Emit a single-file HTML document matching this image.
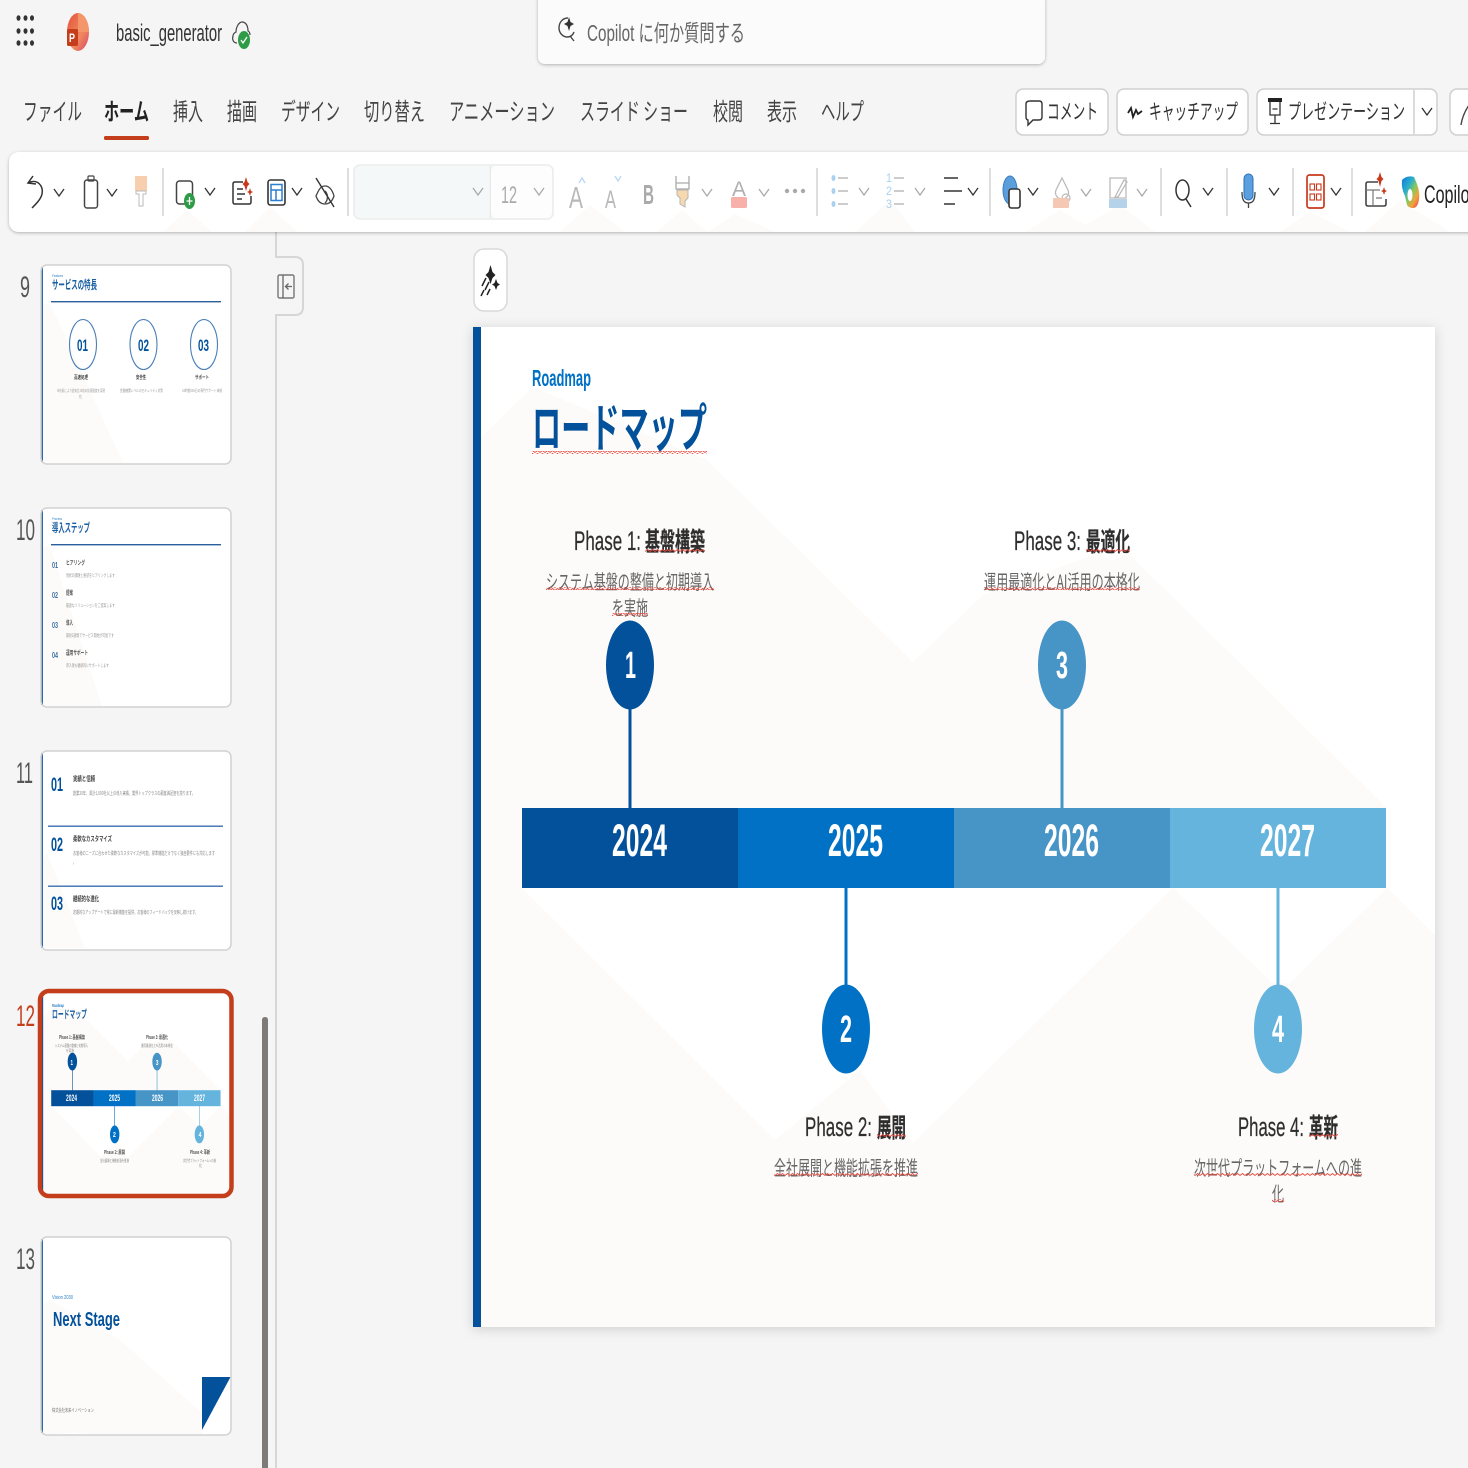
<!DOCTYPE html>
<html lang="ja"><head><meta charset="utf-8"><title>basic_generator</title>
<style>
html,body{margin:0;padding:0;width:1468px;height:1468px;overflow:hidden;background:#f5f5f5}
svg{display:block}
text{font-family:"Liberation Sans","Noto Sans CJK JP",sans-serif;white-space:pre}
.j{font-family:"Noto Sans CJK JP","Liberation Sans",sans-serif}
</style></head><body>
<svg width="1468" height="1468" viewBox="0 0 1468 1468" xmlns="http://www.w3.org/2000/svg">
<defs>
<filter id="sh" x="-5%" y="-5%" width="110%" height="110%"><feDropShadow dx="0" dy="2" stdDeviation="6" flood-color="#000" flood-opacity=".16"/></filter>
<filter id="sh2" x="-5%" y="-30%" width="110%" height="160%"><feDropShadow dx="0" dy="1" stdDeviation="1.5" flood-color="#000" flood-opacity=".28"/></filter>
<pattern id="w" width="5" height="3" patternUnits="userSpaceOnUse"><path d="M0 2.5L2.5 .5L5 2.5" stroke="#e8483f" fill="none" stroke-width=".9"/></pattern>
<path id="c" d="M0 0l5 7 5-7" fill="none" stroke="#333" stroke-width="1.300"/>
<path id="g" d="M0 0l5 7 5-7" fill="none" stroke="#aaa" stroke-width="1.300"/>
<linearGradient id="pp" x1="0" y1="0" x2="1" y2="1"><stop offset="0" stop-color="#e2523c"/><stop offset=".6" stop-color="#f08a5d"/><stop offset="1" stop-color="#d9466a"/></linearGradient>
<linearGradient id="cp" x1="0" y1="0" x2="1" y2="1"><stop offset="0" stop-color="#0f78e0"/><stop offset=".35" stop-color="#2db0c8"/><stop offset=".55" stop-color="#8ac85a"/><stop offset=".75" stop-color="#f2a33c"/><stop offset="1" stop-color="#e8385a"/></linearGradient>
<g id="shapes">
<rect x="473" y="327" width="962" height="1000" fill="#fff"/>
<polygon fill="#fdfbf9" points="481,437 533,387 707,460 913,662 983,595 1099,553 1113,561 1128,553 1387,808 522,808 522,888 775,1140 860,1070 913,1143 1173,888 1273,983 1290,983 1387,888 1435,935 1435,1327 481,1327"/>
<rect x="473" y="327" width="8" height="1000" fill="#03519b"/>
<rect x="628.500" y="705" width="3" height="104" fill="#03519b"/>
<rect x="1060.500" y="705" width="3" height="104" fill="#4794c7"/>
<rect x="844.500" y="887" width="3" height="104" fill="#0071c5"/>
<rect x="1276.500" y="887" width="3" height="104" fill="#64b4de"/>
<rect x="522" y="808" width="216" height="80" fill="#03519b"/>
<rect x="738" y="808" width="216" height="80" fill="#0071c5"/>
<rect x="954" y="808" width="216" height="80" fill="#4794c7"/>
<rect x="1170" y="808" width="216" height="80" fill="#64b4de"/>
<ellipse cx="630" cy="665" rx="24" ry="44.500" fill="#03519b"/>
<ellipse cx="1062" cy="665" rx="24" ry="44.500" fill="#4794c7"/>
<ellipse cx="846" cy="1029" rx="24" ry="44.500" fill="#0071c5"/>
<ellipse cx="1278" cy="1029" rx="24" ry="44.500" fill="#64b4de"/>
</g>
</defs>

<rect width="1468" height="1468" fill="#f5f5f5"/>

<!-- title bar -->
<g fill="#333"><ellipse cx="18.500" cy="18" rx="2" ry="2.800"/><ellipse cx="25.500" cy="18" rx="2" ry="2.800"/><ellipse cx="32" cy="18" rx="2" ry="2.800"/><ellipse cx="18.500" cy="31" rx="2" ry="2.800"/><ellipse cx="25.500" cy="31" rx="2" ry="2.800"/><ellipse cx="32" cy="31" rx="2" ry="2.800"/><ellipse cx="18.500" cy="43" rx="2" ry="2.800"/><ellipse cx="25.500" cy="43" rx="2" ry="2.800"/><ellipse cx="32" cy="43" rx="2" ry="2.800"/></g>
<ellipse cx="78" cy="32" rx="11" ry="19" fill="url(#pp)"/>
<path d="M78 13a11 19 0 0 1 11 19H78z" fill="#f5966a"/>
<rect x="67" y="29" width="11" height="17" rx="1.500" fill="#c43e1c"/>
<text x="69" y="42" font-size="12" font-weight="700" fill="#fff" textLength="6" lengthAdjust="spacingAndGlyphs">P</text>
<text x="116" y="41" font-size="24" fill="#333" textLength="106" lengthAdjust="spacingAndGlyphs">basic_generator</text>
<path d="M237 43c-4 0-5-4-4-7 0-2 1-3 3-4 0-5 3-10 6-10 4 0 6 4 6 9 2 1 2 3 2 4" fill="none" stroke="#444" stroke-width="1.200"/>
<ellipse cx="244" cy="40" rx="6" ry="9" fill="#2e9b47"/>
<path d="M241 40l2 3 4-6" fill="none" stroke="#fff" stroke-width="1.300"/>

<!-- search -->
<rect x="538" y="-8" width="507" height="72" rx="7" fill="#fbfbfb" filter="url(#sh2)"/>
<path d="M568 18c-6 0-9 5-9 10s4 9 8 9 6-2 7-5M570 36l4 5" fill="none" stroke="#444" stroke-width="1.400"/>
<path d="M569 17l1.500 5 3.500 2-3.500 2-1.500 5-1.500-5-3.500-2 3.500-2z" fill="#333"/>
<text x="587" y="41" font-size="23" fill="#666" textLength="158" lengthAdjust="spacingAndGlyphs">Copilot に何か質問する</text>

<!-- tabs -->
<g class="j" font-size="24" fill="#444">
<text class="j" x="23" y="120" textLength="59" lengthAdjust="spacingAndGlyphs">ファイル</text>
<text class="j" x="104" y="120" font-weight="700" fill="#222" textLength="45" lengthAdjust="spacingAndGlyphs">ホーム</text>
<text class="j" x="173" y="120" textLength="30" lengthAdjust="spacingAndGlyphs">挿入</text>
<text class="j" x="227" y="120" textLength="30" lengthAdjust="spacingAndGlyphs">描画</text>
<text class="j" x="281" y="120" textLength="59" lengthAdjust="spacingAndGlyphs">デザイン</text>
<text class="j" x="364" y="120" textLength="61" lengthAdjust="spacingAndGlyphs">切り替え</text>
<text class="j" x="449" y="120" textLength="106" lengthAdjust="spacingAndGlyphs">アニメーション</text>
<text class="j" x="580" y="120" textLength="108" lengthAdjust="spacingAndGlyphs">スライド ショー</text>
<text class="j" x="713" y="120" textLength="30" lengthAdjust="spacingAndGlyphs">校閲</text>
<text class="j" x="767" y="120" textLength="30" lengthAdjust="spacingAndGlyphs">表示</text>
<text class="j" x="821" y="120" textLength="43" lengthAdjust="spacingAndGlyphs">ヘルプ</text>
</g>
<rect x="104" y="136" width="45" height="4" rx="1.500" fill="#c43e1c"/>

<!-- right buttons -->
<g fill="#fff" stroke="#d0d0d0" stroke-width="1.500">
<rect x="1016" y="89" width="92" height="46" rx="7"/>
<rect x="1117" y="89" width="131" height="46" rx="7"/>
<rect x="1257" y="89" width="180" height="46" rx="7"/>
<rect x="1450" y="89" width="40" height="46" rx="7"/>
<path d="M1414 90v44"/>
</g>
<path d="M1030 101h9q3 0 3 3v13q0 3-3 3h-6l-5 5v-5q-2-.5-2-3v-13q0-3 4-3z" fill="none" stroke="#333" stroke-width="1.400"/>
<g class="j" font-size="21" fill="#333">
<text class="j" x="1047" y="119" textLength="51" lengthAdjust="spacingAndGlyphs">コメント</text>
<text class="j" x="1149" y="119" textLength="89" lengthAdjust="spacingAndGlyphs">キャッチアップ</text>
<text class="j" x="1288" y="119" textLength="117" lengthAdjust="spacingAndGlyphs">プレゼンテーション</text>
</g>
<path d="M1128 113l3-5 2 9 3-7 2 4 4-3" fill="none" stroke="#222" stroke-width="1.800"/>
<rect x="1268" y="98" width="14" height="4" fill="#222"/>
<path d="M1270 102v13h10v-13M1272.500 109h5M1275 115v8M1270 123.500h10" fill="none" stroke="#333" stroke-width="1.300"/>
<use href="#c" x="1422" y="108"/>
<path d="M1461 125c1-7 4-14 8-20" fill="none" stroke="#444" stroke-width="1.400"/>

<!-- slide pane -->
<rect x="275" y="232" width="2" height="1236" fill="#d8d6da"/>
<path d="M275 257h20q8 0 8 8v42q0 8-8 8h-20" fill="#f5f5f5" stroke="#d6d6d6" stroke-width="2"/>
<rect x="278" y="275" width="16" height="23" rx="1.500" fill="none" stroke="#777" stroke-width="1.400"/>
<path d="M283 275v23M292 286.500h-6M288.500 283.500l-3 3 3 3" fill="none" stroke="#666" stroke-width="1.300"/>
<path d="M262 1468V1020q0-3 3-3t3 3v448z" fill="#7d7a78"/>

<!-- number labels -->
<g font-size="30" fill="#555">
<text x="20" y="297" textLength="10" lengthAdjust="spacingAndGlyphs">9</text>
<text x="16" y="540" textLength="19" lengthAdjust="spacingAndGlyphs">10</text>
<text x="16" y="783" textLength="17" lengthAdjust="spacingAndGlyphs">11</text>
<text x="16" y="1026" fill="#c43e1c" textLength="19" lengthAdjust="spacingAndGlyphs">12</text>
<text x="16" y="1269" textLength="19" lengthAdjust="spacingAndGlyphs">13</text>
</g>

<!-- thumb 9 -->
<rect x="41" y="265" width="190" height="199" rx="6" fill="#fff"/>
<polygon fill="#fdfbf9" points="43,304 50,303 123,463 43,463" />
<rect x="41" y="267" width="2" height="195" fill="#2a69ad"/>
<text x="52" y="277" font-size="4" fill="#2a7fc5" textLength="11" lengthAdjust="spacingAndGlyphs">Features</text>
<text class="j" x="52" y="289" font-size="12" font-weight="700" fill="#1b5fa3" textLength="45" lengthAdjust="spacingAndGlyphs">サービスの特長</text>
<rect x="51" y="301" width="170" height="1.400" fill="#2a5f9e"/>
<g fill="none" stroke="#4a7fb8" stroke-width="1.100"><ellipse cx="83" cy="344.500" rx="13.500" ry="25"/><ellipse cx="143.500" cy="344.500" rx="13.500" ry="25"/><ellipse cx="204" cy="344.500" rx="13.500" ry="25"/></g>
<g font-size="17" font-weight="700" fill="#03519b">
<text x="77" y="351" textLength="11" lengthAdjust="spacingAndGlyphs">01</text>
<text x="138" y="351" textLength="11" lengthAdjust="spacingAndGlyphs">02</text>
<text x="198" y="351" textLength="11" lengthAdjust="spacingAndGlyphs">03</text>
</g>
<g class="j" font-size="5" font-weight="700" fill="#444">
<text class="j" x="74" y="379" textLength="14" lengthAdjust="spacingAndGlyphs">高速処理</text>
<text class="j" x="136" y="379" textLength="10" lengthAdjust="spacingAndGlyphs">安全性</text>
<text class="j" x="195" y="379" textLength="14" lengthAdjust="spacingAndGlyphs">サポート</text>
</g>
<g class="j" font-size="4" fill="#999">
<text class="j" x="57" y="392" textLength="48" lengthAdjust="spacingAndGlyphs">AI技術により従来比10倍の処理速度を実現</text>
<text class="j" x="79" y="398" textLength="3" lengthAdjust="spacingAndGlyphs">化</text>
<text class="j" x="120" y="392" textLength="43" lengthAdjust="spacingAndGlyphs">金融機関レベルのセキュリティ対策</text>
<text class="j" x="182" y="392" textLength="40" lengthAdjust="spacingAndGlyphs">24時間365日の専門サポート体制</text>
</g>
<rect x="41" y="265" width="190" height="199" rx="6" fill="none" stroke="#d2d2d2" stroke-width="1.500"/>

<!-- thumb 10 -->
<rect x="41" y="508" width="190" height="199" rx="6" fill="#fff"/>
<polygon fill="#fdfbf9" points="43,548 50,546 102,706 43,706"/>
<rect x="41" y="510" width="2" height="195" fill="#2a69ad"/>
<text x="52" y="520" font-size="4" fill="#2a7fc5" textLength="10" lengthAdjust="spacingAndGlyphs">Process</text>
<text class="j" x="52" y="532" font-size="12" font-weight="700" fill="#1b5fa3" textLength="38" lengthAdjust="spacingAndGlyphs">導入ステップ</text>
<rect x="51" y="544" width="170" height="1.400" fill="#2a5f9e"/>
<g font-size="8" font-weight="700" fill="#3a6ea5">
<text x="52" y="568" textLength="6" lengthAdjust="spacingAndGlyphs">01</text>
<text x="52" y="598" textLength="6" lengthAdjust="spacingAndGlyphs">02</text>
<text x="52" y="628" textLength="6" lengthAdjust="spacingAndGlyphs">03</text>
<text x="52" y="658" textLength="6" lengthAdjust="spacingAndGlyphs">04</text>
</g>
<g class="j" font-size="6" font-weight="700" fill="#555">
<text class="j" x="66" y="565" textLength="19" lengthAdjust="spacingAndGlyphs">ヒアリング</text>
<text class="j" x="66" y="595" textLength="7" lengthAdjust="spacingAndGlyphs">提案</text>
<text class="j" x="66" y="625" textLength="7" lengthAdjust="spacingAndGlyphs">導入</text>
<text class="j" x="66" y="655" textLength="22" lengthAdjust="spacingAndGlyphs">運用サポート</text>
</g>
<g class="j" font-size="4.500" fill="#999">
<text class="j" x="66" y="577" textLength="49" lengthAdjust="spacingAndGlyphs">現状の課題と要望をヒアリングします</text>
<text class="j" x="66" y="607" textLength="49" lengthAdjust="spacingAndGlyphs">最適なソリューションをご提案します</text>
<text class="j" x="66" y="637" textLength="48" lengthAdjust="spacingAndGlyphs">最短2週間でサービス開始が可能です</text>
<text class="j" x="66" y="667" textLength="43" lengthAdjust="spacingAndGlyphs">導入後も継続的にサポートします</text>
</g>
<rect x="41" y="508" width="190" height="199" rx="6" fill="none" stroke="#d2d2d2" stroke-width="1.500"/>

<!-- thumb 11 -->
<rect x="41" y="751" width="190" height="199" rx="6" fill="#fff"/>
<polygon fill="#fdfbf9" points="43,859 47,853 85,948 43,948"/>
<rect x="41" y="753" width="2" height="195" fill="#2a69ad"/>
<g font-size="19" font-weight="700" fill="#03519b">
<text x="51" y="791" textLength="12" lengthAdjust="spacingAndGlyphs">01</text>
<text x="51" y="851" textLength="12" lengthAdjust="spacingAndGlyphs">02</text>
<text x="51" y="910" textLength="12" lengthAdjust="spacingAndGlyphs">03</text>
</g>
<rect x="48" y="825.500" width="175" height="1.400" fill="#3a70ad"/>
<rect x="48" y="885.500" width="175" height="1.400" fill="#3a70ad"/>
<g class="j" font-size="7" font-weight="700" fill="#444">
<text class="j" x="73" y="781" textLength="22" lengthAdjust="spacingAndGlyphs">実績と信頼</text>
<text class="j" x="73" y="841" textLength="39" lengthAdjust="spacingAndGlyphs">柔軟なカスタマイズ</text>
<text class="j" x="73" y="901" textLength="26" lengthAdjust="spacingAndGlyphs">継続的な進化</text>
</g>
<g class="j" font-size="5" fill="#888">
<text class="j" x="73" y="795" textLength="122" lengthAdjust="spacingAndGlyphs">創業20年、累計1,000社以上の導入実績。業界トップクラスの顧客満足度を誇ります。</text>
<text class="j" x="73" y="855" textLength="142" lengthAdjust="spacingAndGlyphs">お客様のニーズに合わせた柔軟なカスタマイズが可能。標準機能だけでなく独自要件にも対応します</text>
<text class="j" x="73" y="864" textLength="3" lengthAdjust="spacingAndGlyphs">。</text>
<text class="j" x="73" y="914" textLength="125" lengthAdjust="spacingAndGlyphs">定期的なアップデートで常に最新機能を提供。お客様のフィードバックを反映し続けます。</text>
</g>
<rect x="41" y="751" width="190" height="199" rx="6" fill="none" stroke="#d2d2d2" stroke-width="1.500"/>

<!-- thumb 12 -->
<g transform="translate(41.600 994) scale(.196 .2) translate(-473 -327)"><use href="#shapes"/></g>
<text x="52" y="1007" font-size="4.500" font-weight="700" fill="#2a7fc5" textLength="12" lengthAdjust="spacingAndGlyphs">Roadmap</text>
<text class="j" x="52" y="1018" font-size="11" font-weight="700" fill="#1b5fa3" textLength="35" lengthAdjust="spacingAndGlyphs">ロードマップ</text>
<g class="j" font-size="5" font-weight="700" fill="#555">
<text class="j" x="59" y="1039" textLength="26" lengthAdjust="spacingAndGlyphs">Phase 1: 基盤構築</text>
<text class="j" x="146" y="1039" textLength="22" lengthAdjust="spacingAndGlyphs">Phase 3: 最適化</text>
<text class="j" x="104" y="1154" textLength="21" lengthAdjust="spacingAndGlyphs">Phase 2: 展開</text>
<text class="j" x="190" y="1154" textLength="20" lengthAdjust="spacingAndGlyphs">Phase 4: 革新</text>
</g>
<g class="j" font-size="4" fill="#888">
<text class="j" x="55" y="1047" textLength="33" lengthAdjust="spacingAndGlyphs">システム基盤の整備と初期導入</text>
<text class="j" x="66" y="1052" textLength="8" lengthAdjust="spacingAndGlyphs">を実施</text>
<text class="j" x="141" y="1047" textLength="32" lengthAdjust="spacingAndGlyphs">運用最適化とAI活用の本格化</text>
<text class="j" x="100" y="1162" textLength="29" lengthAdjust="spacingAndGlyphs">全社展開と機能拡張を推進</text>
<text class="j" x="183" y="1162" textLength="33" lengthAdjust="spacingAndGlyphs">次世代プラットフォームへの進</text>
<text class="j" x="199" y="1167" textLength="3" lengthAdjust="spacingAndGlyphs">化</text>
</g>
<g font-size="9" font-weight="700" fill="#fff">
<text x="66" y="1101" textLength="11" lengthAdjust="spacingAndGlyphs">2024</text>
<text x="109" y="1101" textLength="11" lengthAdjust="spacingAndGlyphs">2025</text>
<text x="152" y="1101" textLength="11" lengthAdjust="spacingAndGlyphs">2026</text>
<text x="194" y="1101" textLength="11" lengthAdjust="spacingAndGlyphs">2027</text>
</g>
<g font-size="7.500" font-weight="700" fill="#fff">
<text x="70.500" y="1065" textLength="2.500" lengthAdjust="spacingAndGlyphs">1</text>
<text x="155.800" y="1065" textLength="2.800" lengthAdjust="spacingAndGlyphs">3</text>
<text x="113" y="1137" textLength="2.800" lengthAdjust="spacingAndGlyphs">2</text>
<text x="198.600" y="1137" textLength="2.800" lengthAdjust="spacingAndGlyphs">4</text>
</g>
<rect x="40" y="991" width="191.500" height="205" rx="9" fill="none" stroke="#c43e1c" stroke-width="4.500"/>

<!-- thumb 13 -->
<rect x="41" y="1237" width="190" height="198" rx="6" fill="#fff"/>
<polygon fill="#fdfbf9" points="43,1305 50,1300 120,1340 202,1413 202,1434 85,1434 73,1432 60,1434 43,1434"/>
<rect x="41" y="1239" width="2" height="194" fill="#2a69ad"/>
<text x="52" y="1299" font-size="5" fill="#2a7fc5" textLength="21" lengthAdjust="spacingAndGlyphs">Vision 2030</text>
<text x="53" y="1326" font-size="20" font-weight="700" fill="#03519b" textLength="67" lengthAdjust="spacingAndGlyphs">Next Stage</text>
<text class="j" x="52" y="1412" font-size="5" fill="#777" textLength="42" lengthAdjust="spacingAndGlyphs">株式会社未来イノベーション</text>
<polygon points="202,1377 230.500,1377 202,1430" fill="#03519b"/>
<rect x="41" y="1237" width="190" height="198" rx="6" fill="none" stroke="#d2d2d2" stroke-width="1.500"/>

<!-- star button -->
<rect x="474" y="249" width="33" height="62" rx="10" fill="#fff" stroke="#d4d4d4" stroke-width="1.300"/>
<path d="M490.500 265l2 7 3 3-3 3-2 6-2-6-3-3 3-3z" fill="#222"/>
<path d="M496 279l1.500 4 2.500 1.500-2.500 1.500-1.500 4-1.500-4-2.500-1.500 2.500-1.500z" fill="#222"/>
<path d="M486 278l-4 8M489 282l-4 8M484 290l-3 6M490 289l-3 6" stroke="#222" stroke-width="1.500" fill="none"/>

<!-- main slide -->
<rect x="473" y="327" width="962" height="1000" fill="#fff" filter="url(#sh)"/>
<use href="#shapes"/>
<text x="532" y="386" font-size="23" font-weight="700" fill="#0071c5" textLength="59" lengthAdjust="spacingAndGlyphs">Roadmap</text>
<text class="j" x="532" y="447" font-size="52" font-weight="700" fill="#03519b" textLength="175" lengthAdjust="spacingAndGlyphs">ロードマップ</text>
<g font-size="45" font-weight="700" fill="#fff">
<text x="612" y="856" textLength="55" lengthAdjust="spacingAndGlyphs">2024</text>
<text x="828" y="856" textLength="55" lengthAdjust="spacingAndGlyphs">2025</text>
<text x="1044" y="856" textLength="55" lengthAdjust="spacingAndGlyphs">2026</text>
<text x="1260" y="856" textLength="55" lengthAdjust="spacingAndGlyphs">2027</text>
</g>
<g font-size="38" font-weight="700" fill="#fff">
<text x="625" y="678" textLength="11" lengthAdjust="spacingAndGlyphs">1</text>
<text x="1056" y="678" textLength="12" lengthAdjust="spacingAndGlyphs">3</text>
<text x="840" y="1042" textLength="12" lengthAdjust="spacingAndGlyphs">2</text>
<text x="1272" y="1042" textLength="12" lengthAdjust="spacingAndGlyphs">4</text>
</g>
<g font-size="27" fill="#2e2e2e" stroke="#2e2e2e" stroke-width=".25">
<text x="574" y="550" textLength="67" lengthAdjust="spacingAndGlyphs">Phase 1:</text>
<text class="j" x="645" y="551" font-weight="700" font-size="26" textLength="60" lengthAdjust="spacingAndGlyphs">基盤構築</text>
<text x="1014" y="550" textLength="67" lengthAdjust="spacingAndGlyphs">Phase 3:</text>
<text class="j" x="1086" y="551" font-weight="700" font-size="26" textLength="44" lengthAdjust="spacingAndGlyphs">最適化</text>
<text x="805" y="1136" textLength="67" lengthAdjust="spacingAndGlyphs">Phase 2:</text>
<text class="j" x="877" y="1137" font-weight="700" font-size="26" textLength="29" lengthAdjust="spacingAndGlyphs">展開</text>
<text x="1238" y="1136" textLength="66" lengthAdjust="spacingAndGlyphs">Phase 4:</text>
<text class="j" x="1309" y="1137" font-weight="700" font-size="26" textLength="29" lengthAdjust="spacingAndGlyphs">革新</text>
</g>
<g class="j" font-size="20" fill="#666">
<text class="j" x="546" y="589" textLength="168" lengthAdjust="spacingAndGlyphs">システム基盤の整備と初期導入</text>
<text class="j" x="612" y="615" textLength="36" lengthAdjust="spacingAndGlyphs">を実施</text>
<text class="j" x="984" y="589" textLength="156" lengthAdjust="spacingAndGlyphs">運用最適化とAI活用の本格化</text>
<text class="j" x="774" y="1175" textLength="144" lengthAdjust="spacingAndGlyphs">全社展開と機能拡張を推進</text>
<text class="j" x="1194" y="1175" textLength="168" lengthAdjust="spacingAndGlyphs">次世代プラットフォームへの進</text>
<text class="j" x="1272" y="1201" textLength="12" lengthAdjust="spacingAndGlyphs">化</text>
</g>
<g fill="url(#w)">
<rect x="532" y="451" width="175" height="3"/>
<rect x="645" y="549" width="60" height="3"/>
<rect x="1086" y="549" width="44" height="3"/>
<rect x="877" y="1134" width="29" height="3"/>
<rect x="1309" y="1134" width="29" height="3"/>
<rect x="546" y="587" width="168" height="3"/>
<rect x="612" y="613" width="36" height="3"/>
<rect x="984" y="587" width="156" height="3"/>
<rect x="774" y="1173" width="144" height="3"/>
<rect x="1194" y="1173" width="168" height="3"/>
<rect x="1272" y="1199" width="12" height="3"/>
</g>

<!-- ribbon -->
<rect x="9" y="152" width="1480" height="80" rx="10" fill="#fff" filter="url(#sh2)"/>
<g fill="#fdfbf9">
<polygon points="163,232 187,210 212,232"/><polygon points="245,232 270,207 297,232"/>
<polygon points="560,232 590,205 625,232"/><polygon points="656,232 682,210 708,232 735,214 775,232"/>
<polygon points="855,232 890,200 915,232"/><polygon points="1025,232 1060,210 1085,225 1120,205 1155,232"/>
<polygon points="1280,232 1310,212 1350,232"/><polygon points="1365,232 1400,200 1450,232"/>
</g>
<g stroke="#c9c9c9" stroke-width="1.200"><path d="M163 168v48M348 168v48M817 168v48M990 168v48M1161 168v48M1227 168v48M1293 168v48M1352 168v48"/></g>

<path d="M33 176l-5 7 8 1M28 183c9-5 16 3 14 11-1 5-6 10-10 14" fill="none" stroke="#333" stroke-width="1.500"/>
<use href="#c" x="54" y="189"/>
<rect x="84.500" y="180" width="13" height="28" rx="2.500" fill="none" stroke="#444" stroke-width="1.500"/>
<rect x="88" y="176" width="6" height="5" rx="1" fill="none" stroke="#444" stroke-width="1.200"/>
<use href="#c" x="107" y="189"/>
<rect x="135" y="176" width="12" height="15" fill="#f8cfae"/>
<path d="M136 191h10v3h-3v12h-4v-12h-3z" fill="#fff" stroke="#bbb" stroke-width="1"/>

<rect x="176.500" y="181" width="16" height="23" rx="3" fill="none" stroke="#444" stroke-width="1.500"/>
<ellipse cx="189.500" cy="201" rx="5.500" ry="8" fill="#2e9b47"/>
<path d="M189.500 197v8M186.500 201h6" stroke="#fff" stroke-width="1.300"/>
<use href="#c" x="205" y="188"/>
<path d="M243 182h-8q-2 0-2 2v18q0 2 2 2h14q2 0 2-2v-6" fill="none" stroke="#333" stroke-width="1.500"/>
<path d="M237 189h6M237 194h8M237 199h5" stroke="#333" stroke-width="1.500"/>
<path d="M246 177l1.500 5 2 2-2 2-1.500 5-1.500-5-2-2 2-2zM250 188l1 3 2 1-2 1-1 3-1-3-2-1 2-1z" fill="#c8391c"/>
<rect x="268" y="180" width="17" height="25" rx="2.500" fill="none" stroke="#333" stroke-width="1.600"/>
<path d="M271 184.500h11v16h-11zM271 190h11M276 190v10" fill="none" stroke="#2a7fd0" stroke-width="1.500"/>
<use href="#c" x="292" y="188"/>
<path d="M316 196c3-7 5-10 9-10s7 3 9 10c-2 6-5 8-9 8s-7-2-9-8zM325 191a5 7 0 0 1 0 12" fill="none" stroke="#444" stroke-width="1.300"/>
<path d="M316 178l18 29" stroke="#333" stroke-width="1.400"/>

<rect x="354" y="165" width="199" height="54" rx="6" fill="#f5f8f8" stroke="#ececec" stroke-width="1.500"/>
<path d="M490.500 166v52" stroke="#e8e8e8" stroke-width="1.500"/>
<rect x="491" y="166" width="61" height="52" rx="5" fill="#fdfdfd"/>
<use href="#g" x="473" y="188"/>
<text x="501" y="203" font-size="24" fill="#aaa" textLength="16" lengthAdjust="spacingAndGlyphs">12</text>
<use href="#g" x="534" y="188"/>

<text x="569" y="208" font-size="31" fill="#b8b8b8" textLength="14" lengthAdjust="spacingAndGlyphs">A</text>
<path d="M579 183l3-5 3 5" fill="none" stroke="#b9d7f2" stroke-width="1.300"/>
<text x="605" y="208" font-size="25" fill="#b8b8b8" textLength="11" lengthAdjust="spacingAndGlyphs">A</text>
<path d="M615 176l3 5 3-5" fill="none" stroke="#b9d7f2" stroke-width="1.300"/>
<text x="643" y="204" font-size="28" font-weight="700" fill="#aaa" textLength="11" lengthAdjust="spacingAndGlyphs">B</text>
<path d="M676 176v13h13v-13M676 183h13" fill="none" stroke="#aaa" stroke-width="1.300"/>
<path d="M677 190h11v8l-3 3v6l-5-3v-6l-3-3z" fill="#f7d9b0" stroke="#b5b5b5" stroke-width="1"/>
<use href="#g" x="702" y="189"/>
<text x="732" y="196" font-size="21" fill="#b0b0b0" textLength="14" lengthAdjust="spacingAndGlyphs">A</text>
<rect x="731" y="197" width="16" height="11" rx="1.500" fill="#f7b0aa"/>
<use href="#g" x="759" y="189"/>
<g fill="#aaa"><circle cx="787" cy="191" r="2.200"/><circle cx="795" cy="191" r="2.200"/><circle cx="803" cy="191" r="2.200"/></g>

<g stroke="#bbb" stroke-width="1.400"><path d="M838 178h10M838 191h10M838 204h10"/></g>
<g fill="#a9d0ee"><ellipse cx="833.500" cy="178" rx="2" ry="3"/><ellipse cx="833.500" cy="191" rx="2" ry="3"/><ellipse cx="833.500" cy="204" rx="2" ry="3"/></g>
<use href="#g" x="859" y="188"/>
<g font-size="12" fill="#a9d0ee"><text x="886" y="182" textLength="6" lengthAdjust="spacingAndGlyphs">1</text><text x="886" y="195" textLength="6" lengthAdjust="spacingAndGlyphs">2</text><text x="886" y="208" textLength="6" lengthAdjust="spacingAndGlyphs">3</text></g>
<g stroke="#bbb" stroke-width="1.400"><path d="M894 178h10M894 191h10M894 204h10"/></g>
<use href="#g" x="915" y="188"/>
<g stroke="#333" stroke-width="1.600"><path d="M944 178h14M944 191h18M944 204h11"/></g>
<use href="#c" x="968" y="188"/>

<ellipse cx="1010" cy="190" rx="7" ry="14" fill="#5a9fdc" stroke="#3f7fc0" stroke-width="1"/>
<rect x="1009" y="189" width="11" height="19" rx="2.500" fill="#fff" stroke="#333" stroke-width="1.600"/>
<use href="#c" x="1028" y="188"/>
<path d="M1062 178l6 12c2 5-2 9-6 9s-8-4-6-9z" fill="none" stroke="#bbb" stroke-width="1.300"/>
<circle cx="1066" cy="198" r="4" fill="none" stroke="#bbb" stroke-width="1.200"/>
<rect x="1053" y="198" width="16" height="10" rx="1" fill="#f5c8b4"/>
<use href="#g" x="1081" y="189"/>
<path d="M1110 178h16v20h-16zM1115 197l9-17 3 2-9 15z" fill="#fff" stroke="#bbb" stroke-width="1.300"/>
<rect x="1109" y="199" width="18" height="9" fill="#b4d3ea"/>
<use href="#g" x="1137" y="189"/>

<ellipse cx="1182.500" cy="190" rx="6.500" ry="10" fill="none" stroke="#333" stroke-width="1.500"/>
<path d="M1186 199l5 8" stroke="#333" stroke-width="1.500"/>
<use href="#c" x="1203" y="188"/>
<rect x="1244" y="174" width="9" height="26" rx="4.500" fill="#5b9fde" stroke="#2b6fb8" stroke-width="1"/>
<path d="M1242 192c0 8 2 11 6.500 11s6.500-3 6.500-11M1248.500 203v5" fill="none" stroke="#444" stroke-width="1.300"/>
<use href="#c" x="1269" y="188"/>
<rect x="1307" y="175" width="17" height="33" rx="2.500" fill="none" stroke="#c8391c" stroke-width="1.700"/>
<g fill="none" stroke="#c8391c" stroke-width="1.100"><rect x="1310" y="184" width="4.500" height="6"/><rect x="1316.500" y="184" width="4.500" height="6"/><rect x="1310" y="194" width="4.500" height="6"/><rect x="1316.500" y="194" width="4.500" height="6"/></g>
<use href="#c" x="1331" y="188"/>
<path d="M1378 182h-10q-2 0-2 2v20q0 2 2 2h16q2 0 2-2v-5" fill="none" stroke="#444" stroke-width="1.600"/>
<path d="M1366 190h14M1373 190v16M1376 198h6" stroke="#777" stroke-width="1.200"/>
<path d="M1380 172l1.500 5 2 2-2 2-1.500 6-1.500-6-2-2 2-2zM1384 187l1 3 2 1-2 1-1 3-1-3-2-1 2-1z" fill="#c8391c"/>
<path d="M1402 180q5-5 12-3l3 7q3 8 2 15-1 9-6 9-4 0-6-3l-2-9q-4-8-3-16z" fill="url(#cp)"/>
<ellipse cx="1410" cy="195" rx="2.500" ry="6" fill="#fff"/>
<text x="1424" y="203" font-size="25" fill="#222" textLength="50" lengthAdjust="spacingAndGlyphs">Copilot</text>
</svg>
</body></html>
